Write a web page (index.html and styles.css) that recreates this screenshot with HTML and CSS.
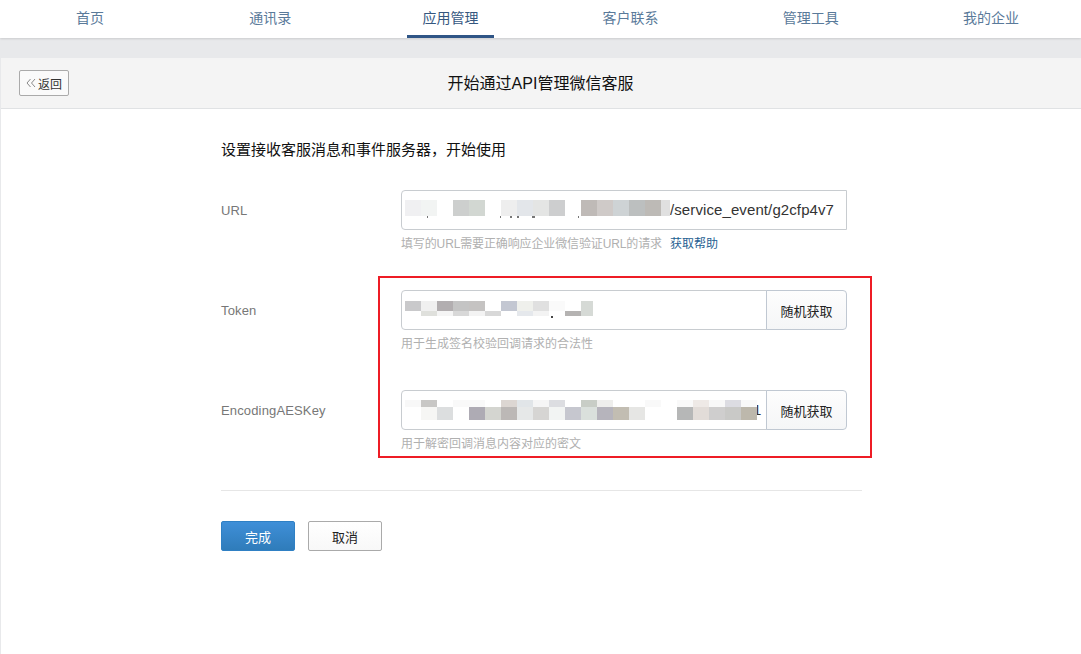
FILE: index.html
```html
<!DOCTYPE html>
<html lang="zh-CN">
<head>
  <meta charset="UTF-8">
  <title>开始通过API管理微信客服</title>
  <link rel="stylesheet" href="styles.css">
</head>
<body>

<nav class="nav">
  <a class="nav-item">首页</a>
  <a class="nav-item">通讯录</a>
  <a class="nav-item active">应用管理</a>
  <a class="nav-item">客户联系</a>
  <a class="nav-item">管理工具</a>
  <a class="nav-item">我的企业</a>
</nav>

<div class="card">
  <div class="card-head">
    <a class="back">
      <svg class="back-icon" width="10" height="10" viewBox="0 0 10 10"><path d="M4.5 1 L1 5 L4.5 9 M9 1 L5.5 5 L9 9" fill="none" stroke="#8a8a8a" stroke-width="1"/></svg>
      返回
    </a>
    <h1 class="title">开始通过API管理微信客服</h1>
  </div>

  <div class="form">
    <p class="lead">设置接收客服消息和事件服务器，开始使用</p>

    <div class="row">
      <label class="row-label">URL</label>
      <div class="row-body">
        <div class="field">
          <svg class="mosaic" width="265" height="20" viewBox="0 0 265 20" shape-rendering="crispEdges">
            <rect x="0" y="0" width="16" height="16" fill="#f0f0f2"/>
            <rect x="16" y="0" width="16" height="16" fill="#f2f4f3"/>
            <rect x="48" y="0" width="16" height="16" fill="#cdcfce"/>
            <rect x="64" y="0" width="16" height="16" fill="#d2d7d2"/>
            <rect x="96" y="0" width="16" height="16" fill="#eeeeee"/>
            <rect x="112" y="0" width="16" height="16" fill="#e3e6ea"/>
            <rect x="128" y="0" width="16" height="16" fill="#e4e5e4"/>
            <rect x="144" y="0" width="16" height="16" fill="#cdcecf"/>
            <rect x="176" y="0" width="16" height="16" fill="#bfbab7"/>
            <rect x="192" y="0" width="16" height="16" fill="#cfcac8"/>
            <rect x="208" y="0" width="16" height="16" fill="#ced3d5"/>
            <rect x="224" y="0" width="16" height="16" fill="#bcbfbf"/>
            <rect x="240" y="0" width="16" height="16" fill="#bdbab6"/>
            <rect x="256" y="0" width="9" height="16" fill="#e0e0e0"/>
            <rect x="22" y="16" width="1" height="2" fill="#777"/>
            <rect x="95" y="16" width="1" height="2" fill="#777"/>
            <rect x="105" y="16" width="2" height="2" fill="#777"/>
            <rect x="112" y="16" width="2" height="2" fill="#777"/>
            <rect x="127" y="16" width="3" height="2" fill="#777"/>
            <rect x="173" y="16" width="1" height="2" fill="#777"/>
          </svg>
          <span class="field-text">/service_event/g2cfp4v7</span>
        </div>
        <p class="hint hint-url">填写的URL需要正确响应企业微信验证URL的请求<a class="hint-link">获取帮助</a></p>
      </div>
    </div>

    <div class="row">
      <label class="row-label">Token</label>
      <div class="row-body">
        <div class="field">
          <svg class="mosaic mosaic-token" width="190" height="17" viewBox="0 0 190 17" shape-rendering="crispEdges">
            <rect x="0" y="0" width="16" height="10" fill="#c9c9cb"/>
            <rect x="16" y="0" width="16" height="10" fill="#f0f0f0"/>
            <rect x="32" y="0" width="16" height="10" fill="#b2aeb0"/>
            <rect x="48" y="0" width="16" height="10" fill="#c4c4c4"/>
            <rect x="64" y="0" width="16" height="10" fill="#c5c3c2"/>
            <rect x="96" y="0" width="16" height="10" fill="#c3c7d2"/>
            <rect x="112" y="0" width="16" height="10" fill="#eff0ec"/>
            <rect x="128" y="0" width="16" height="10" fill="#e0e0e0"/>
            <rect x="144" y="0" width="16" height="10" fill="#fafafa"/>
            <rect x="176" y="0" width="12" height="15" fill="#d6dad6"/>
            <rect x="16" y="10" width="16" height="5" fill="#dfe0dc"/>
            <rect x="32" y="10" width="16" height="5" fill="#f5f5f5"/>
            <rect x="48" y="10" width="16" height="5" fill="#d8d8d8"/>
            <rect x="64" y="10" width="16" height="5" fill="#f3f3f3"/>
            <rect x="80" y="10" width="16" height="5" fill="#d8d8d8"/>
            <rect x="112" y="10" width="16" height="5" fill="#e5e8ec"/>
            <rect x="128" y="10" width="16" height="5" fill="#f3f3f3"/>
            <rect x="160" y="10" width="16" height="5" fill="#b5b3b2"/>
            <rect x="146" y="15" width="2" height="2" fill="#444"/>
          </svg>
        </div>
        <button class="addon">随机获取</button>
        <p class="hint">用于生成签名校验回调请求的合法性</p>
      </div>
    </div>

    <div class="row">
      <label class="row-label">EncodingAESKey</label>
      <div class="row-body">
        <div class="field">
          <svg class="mosaic mosaic-aes" width="352" height="20" viewBox="0 0 352 20" shape-rendering="crispEdges">
            <rect x="0" y="0" width="16" height="7" fill="#f8f8f8"/>
            <rect x="16" y="0" width="16" height="7" fill="#c8c7c5"/>
            <rect x="48" y="0" width="32" height="7" fill="#f9f9f9"/>
            <rect x="96" y="0" width="16" height="7" fill="#dcd6d2"/>
            <rect x="112" y="0" width="16" height="7" fill="#e1e5e8"/>
            <rect x="128" y="0" width="16" height="7" fill="#f5f5f5"/>
            <rect x="144" y="0" width="16" height="7" fill="#dcdde1"/>
            <rect x="176" y="0" width="16" height="7" fill="#c8cdc6"/>
            <rect x="192" y="0" width="16" height="7" fill="#eeeeec"/>
            <rect x="240" y="0" width="16" height="7" fill="#f9f9f9"/>
            <rect x="272" y="0" width="16" height="7" fill="#f9f9f9"/>
            <rect x="288" y="0" width="16" height="7" fill="#eee9e6"/>
            <rect x="304" y="0" width="16" height="7" fill="#f8f8f8"/>
            <rect x="320" y="0" width="16" height="7" fill="#dcdce2"/>
            <rect x="336" y="0" width="16" height="7" fill="#f9f9f9"/>
            <rect x="16" y="7" width="16" height="13" fill="#f6f6f4"/>
            <rect x="32" y="7" width="16" height="13" fill="#dcdedf"/>
            <rect x="64" y="7" width="16" height="13" fill="#aeabb4"/>
            <rect x="80" y="7" width="16" height="13" fill="#d4d5d0"/>
            <rect x="96" y="7" width="16" height="13" fill="#bcb8b6"/>
            <rect x="112" y="7" width="16" height="13" fill="#e6e8e8"/>
            <rect x="128" y="7" width="16" height="13" fill="#d6d5d3"/>
            <rect x="144" y="7" width="16" height="13" fill="#f2f4f3"/>
            <rect x="160" y="7" width="16" height="13" fill="#c6c7cf"/>
            <rect x="176" y="7" width="16" height="13" fill="#dae0dc"/>
            <rect x="192" y="7" width="16" height="13" fill="#b6b4bc"/>
            <rect x="208" y="7" width="16" height="13" fill="#c2bdb2"/>
            <rect x="224" y="7" width="16" height="13" fill="#e6e6e4"/>
            <rect x="272" y="7" width="16" height="13" fill="#b6b7b7"/>
            <rect x="288" y="7" width="16" height="13" fill="#e2dcd8"/>
            <rect x="304" y="7" width="16" height="13" fill="#cfcece"/>
            <rect x="320" y="7" width="16" height="13" fill="#c9c9c7"/>
            <rect x="336" y="7" width="16" height="13" fill="#bdb8ac"/>
          </svg>
          <span class="field-text field-cut">1</span>
        </div>
        <button class="addon">随机获取</button>
        <p class="hint">用于解密回调消息内容对应的密文</p>
      </div>
    </div>

    <div class="highlight"></div>

    <div class="actions">
      <button class="btn btn-primary">完成</button>
      <button class="btn">取消</button>
    </div>
  </div>
</div>

</body>
</html>
```

FILE: styles.css
```css
* { box-sizing: border-box; }
html, body { height: 100%; }
body {
  margin: 0;
  overflow: hidden;
  background-color: #e8e9eb;
  color: #222;
  font-family: "Liberation Sans", "Noto Sans CJK SC", sans-serif;
  font-size: 13px;
}

.nav {
  display: grid;
  grid-template-columns: repeat(6, 1fr);
  height: 38px;
  background-color: #fff;
  box-shadow: 0 1px 2px rgba(0, 0, 0, 0.12);
}
.nav-item {
  justify-self: center;
  width: 87px;
  height: 38px;
  font-size: 14px;
  line-height: 36px;
  text-align: center;
  color: #5a7a9a;
}
.nav-item.active {
  color: #35577f;
  border-bottom: 3px solid #2f5586;
}

.card {
  height: 596px;
  margin: 20px 0 0 1px;
  background-color: #fff;
  border-radius: 3px 0 0 0;
}
.card-head {
  position: relative;
  height: 51px;
  padding: 12px 0 0 18px;
  background-color: #f4f4f4;
  border-bottom: 1px solid #e0e2e4;
}
.title {
  position: absolute;
  top: 15px;
  left: 0;
  right: 1px;
  margin: 0;
  font-size: 16px;
  font-weight: normal;
  line-height: 22px;
  text-align: center;
  color: #111;
}
.back {
  display: flex;
  align-items: center;
  justify-content: center;
  gap: 2px;
  width: 50px;
  height: 26px;
  font-size: 12px;
  color: #333;
  background-color: #fafafa;
  border: 1px solid #aaa;
  border-radius: 2px;
}

.form {
  position: relative;
  width: 641px;
  margin-left: 220px;
  padding-top: 31px;
}
.lead {
  margin: 0 0 30px;
  font-size: 15px;
  line-height: 20px;
  color: #111;
}
.row {
  display: flex;
  height: 100px;
}
.row-label {
  flex: none;
  width: 180px;
  padding-top: 12px;
  font-size: 13px;
  line-height: 18px;
  letter-spacing: 0.15px;
  color: #777;
}
.row-body {
  display: flex;
  flex-wrap: wrap;
  align-content: flex-start;
  width: 446px;
}
.field {
  display: flex;
  flex: 1;
  height: 40px;
  padding: 9px 0 0 3px;
  overflow: hidden;
  background-color: #fff;
  border: 1px solid #c8ccd0;
  border-radius: 4px;
  font-size: 15px;
  line-height: 20px;
  color: #333;
}
.field:not(:last-child) {
  border-radius: 4px 0 0 4px;
}
.mosaic {
  flex: none;
  position: relative;
}
.mosaic-token { margin-top: 1px; }
.field-text {
  flex: none;
  letter-spacing: 0.1px;
}
.field-cut {
  margin-left: -4px;
}
.addon {
  flex: none;
  width: 81px;
  height: 40px;
  margin-left: -1px;
  padding: 0;
  font: inherit;
  color: #222;
  background: linear-gradient(#fdfdfd, #f5f6f7);
  border: 1px solid #c0c8d2;
  border-radius: 0 4px 4px 0;
}
.hint {
  flex: 100% 0 0;
  margin: 6px 0 0;
  font-size: 12px;
  line-height: 17px;
  color: #b0b0b0;
}
.hint-url {
  letter-spacing: -0.13px;
}
.hint-link {
  margin-left: 8px;
  letter-spacing: 0;
  color: #1f5f92;
}

.highlight {
  position: absolute;
  top: 167px;
  left: 157px;
  width: 494px;
  height: 182px;
  border: 2px solid #ee1c25;
}

.actions {
  display: flex;
  gap: 13px;
  padding-top: 30px;
  border-top: 1px solid #e6e6e6;
}
.btn {
  width: 74px;
  height: 30px;
  padding: 0;
  font: inherit;
  color: #222;
  background: linear-gradient(#fff, #f8f8f8);
  border: 1px solid #aaa;
  border-radius: 2px;
}
.btn-primary {
  color: #fff;
  background: linear-gradient(#3f8fd8, #2f7cba);
  border: 1px solid #2f80c4;
}
```
